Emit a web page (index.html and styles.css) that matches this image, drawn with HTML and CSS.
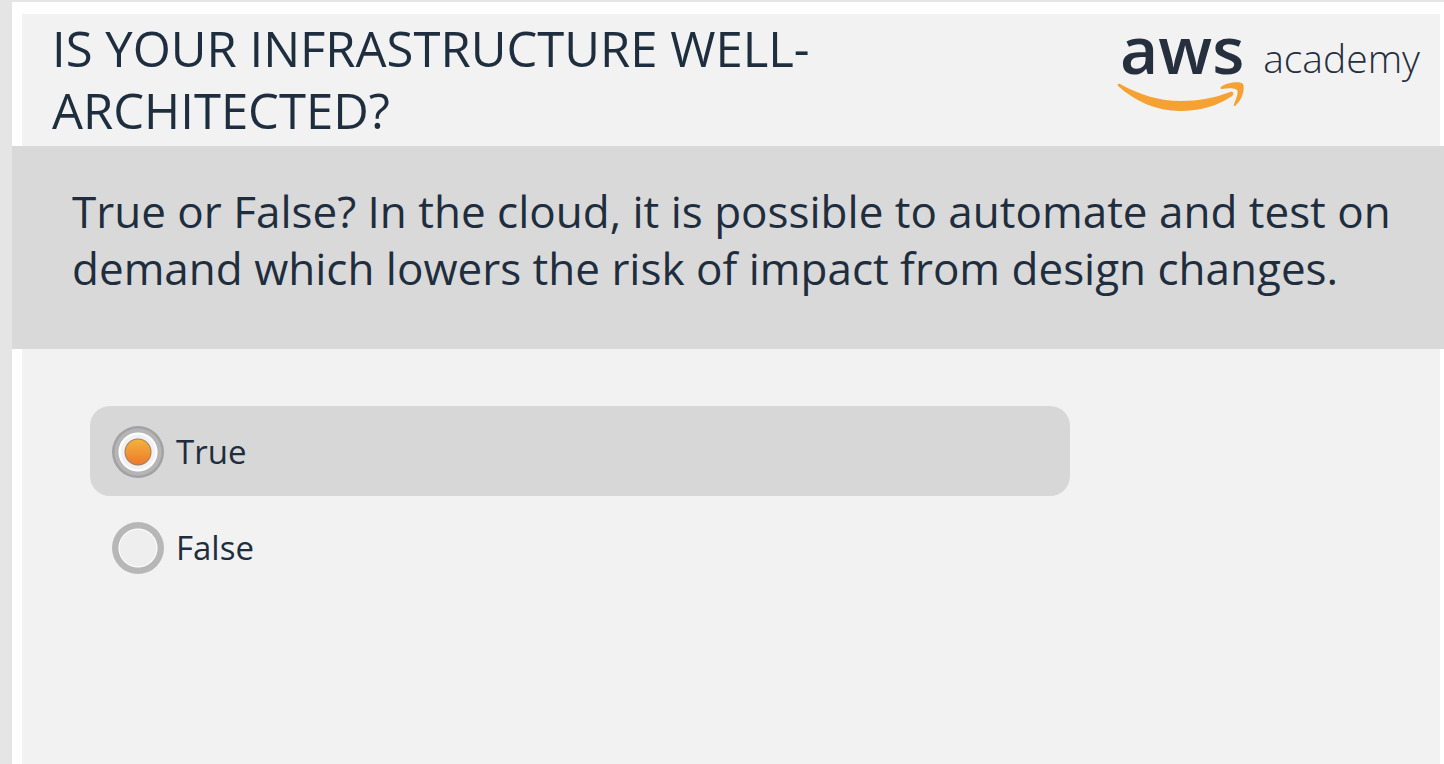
FILE: index.html
```html
<!DOCTYPE html>
<html lang="en">
<head>
<meta charset="utf-8">
<meta name="viewport" content="width=device-width, initial-scale=1">
<title>Is your infrastructure well-architected?</title>
<link rel="stylesheet" href="styles.css">
</head>
<body>
<main class="slide">
  <header class="slide-header">
    <h1 class="title">IS YOUR INFRASTRUCTURE WELL-<br>ARCHITECTED?</h1>
    <div class="logo">
      <div class="logo-mark">
        <span class="logo-aws">aws</span>
        <svg class="logo-smile" viewBox="0 0 128 32" aria-hidden="true">
          <path d="M0 3C-1 2 0 0 2 1C22 12 42 18 63 18C80 18 97 15 112 9C115 8 117 11 114 13C100 23 81 28 62 28C38 28 17 18 0 3Z"/>
          <path d="M103 4C102 5 102 6 104 6C110 5 117 5 119 7C121 9 118 16 116 21C115 23 117 24 118 22C125 16 127 5 125 1C123-2 109-1 103 4Z"/>
        </svg>
      </div>
      <span class="logo-academy">academy</span>
    </div>
  </header>
  <form class="quiz">
    <fieldset class="quiz-fields">
      <legend class="question">True or False? In the cloud, it is possible to automate and test on demand which lowers the risk of impact from design changes.</legend>
      <div class="answers">
        <label class="answer"><input class="radio" type="radio" name="answer" value="true" checked><span>True</span></label>
        <label class="answer"><input class="radio" type="radio" name="answer" value="false"><span>False</span></label>
      </div>
    </fieldset>
  </form>
</main>
</body>
</html>
```
FILE: styles.css
```css
* {
  box-sizing: border-box;
}

body {
  margin: 0;
  min-height: 100vh;
  padding: 2px 0 0 12px;
  display: flex;
  background: #e5e5e5;
  color: #1e2e3e;
  font-family: "Open Sans", "Noto Sans", sans-serif;
}

.slide {
  flex: 1;
  min-width: 0;
  padding-top: 12px;
  display: flex;
  flex-direction: column;
  background: #fff;
}

.slide-header {
  margin: 0 4px 0 10px;
  padding: 3px 20px 5px 30px;
  display: flex;
  justify-content: space-between;
  align-items: flex-start;
  background: #f2f2f2;
}

.title {
  margin: 0;
  font-size: 49px;
  font-weight: 400;
  line-height: 62px;
}

.logo {
  display: flex;
  align-items: flex-start;
  gap: 17px;
  color: #252f3e;
}

.logo-mark {
  width: 128px;
  padding-top: 4px;
}

.logo-aws {
  display: block;
  margin-bottom: 8px;
  font-size: 66px;
  font-weight: 600;
  line-height: 54px;
  text-align: center;
}

.logo-smile {
  display: block;
  width: 128px;
  height: 32px;
  overflow: visible;
  fill: #f5a133;
}

.logo-academy {
  padding-top: 15px;
  font-size: 39px;
  font-weight: 300;
  line-height: 52px;
}

.quiz {
  flex: 1;
  display: flex;
}

.quiz-fields {
  flex: 1;
  min-width: 0;
  margin: 0;
  padding: 0;
  border: 0;
  display: flex;
  flex-direction: column;
}

.question {
  width: 100%;
  padding: 37px 44px 52px 60px;
  background: #d9d9d9;
  font-size: 44px;
  line-height: 57px;
}

.answers {
  flex: 1;
  margin: 0 4px 0 10px;
  padding: 57px 24px 24px 68px;
  display: flex;
  flex-direction: column;
  gap: 6px;
  background: #f2f2f2;
}

.answer {
  max-width: 980px;
  min-height: 90px;
  padding: 2px 22px 0;
  display: flex;
  align-items: center;
  gap: 12px;
  border-radius: 20px;
  font-size: 33px;
  line-height: 46px;
}

.answer:has(:checked) {
  background: #d7d7d7;
}

.radio {
  flex: none;
  width: 52px;
  height: 52px;
  margin: 0;
  appearance: none;
  border-radius: 50%;
  background: radial-gradient(circle, #eee 18px, #fff 19px, #b7b7b7 20px);
}

.radio:checked {
  background:
    radial-gradient(circle, transparent 12px, #9b8068 13px, #f1f1f3 14px 17px, #fff 18px 19px, #b5b5b6 20px 23px, #a2a2a5 24px),
    linear-gradient(#f3b13b 14px, #ee7b2e 38px);
}
```
